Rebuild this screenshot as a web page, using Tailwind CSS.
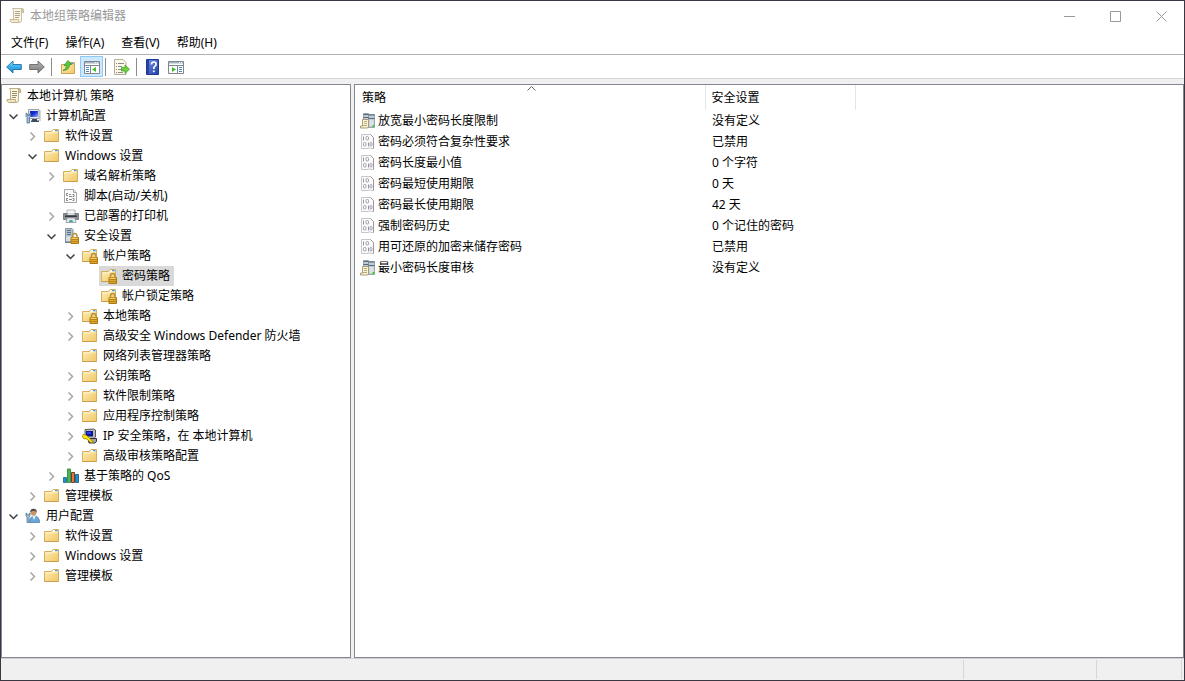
<!DOCTYPE html>
<html lang="zh-CN">
<head>
<meta charset="utf-8">
<meta name="viewport" content="width=device-width, initial-scale=1">
<title>本地组策略编辑器</title>
<script src="https://cdn.jsdelivr.net/npm/@tailwindcss/browser@4"></script>
</head>
<body class="h-screen overflow-hidden bg-white font-['Noto_Sans','Noto_Sans_CJK_SC',sans-serif] text-xs leading-5 text-black">

<svg class="absolute size-0" aria-hidden="true">
  <defs>
    <linearGradient id="gFolder" x1="0" y1="0" x2="1" y2="1"><stop offset="0" stop-color="#ffeeb5"/><stop offset="1" stop-color="#f0c765"/></linearGradient>
    <linearGradient id="gBlue" x1="0" y1="0" x2="0" y2="1"><stop offset="0" stop-color="#8fdcff"/><stop offset=".5" stop-color="#35aee8"/><stop offset="1" stop-color="#1d8ad0"/></linearGradient>
    <linearGradient id="gGray" x1="0" y1="0" x2="0" y2="1"><stop offset="0" stop-color="#b5b5b5"/><stop offset="1" stop-color="#7c7c7c"/></linearGradient>
    <linearGradient id="gHelp" x1="0" y1="0" x2="1" y2="1"><stop offset="0" stop-color="#6f8fe0"/><stop offset="1" stop-color="#2440a8"/></linearGradient>
    <linearGradient id="gScreen" x1="0" y1="0" x2="1" y2="1"><stop offset="0" stop-color="#0a1fb8"/><stop offset=".45" stop-color="#1530d0"/><stop offset="1" stop-color="#9db8ff"/></linearGradient>
  </defs>
  <symbol id="scroll" viewBox="0 0 16 16">
    <path d="M3.500.5h9.500q1.500 0 1.500 1.500v2.500h-2v7.500q0 2.500-2 2.500H3q1.500-.8 1.500-2.500V2.500q0-1.500-1-2z" fill="#fbf5dc" stroke="#b3a67f" stroke-width=".9"/>
    <path d="M1 11.500h8.500q-.3 2 1 3H2.500Q1 14 1 11.500z" fill="#f0e4bc" stroke="#b3a67f" stroke-width=".9"/>
    <path d="M12.500.8q2 0 2 1.500v2.200h-2z" fill="#d8c896" stroke="#b3a67f" stroke-width=".9"/>
    <path d="M6 3.500h5M6 5.500h5M6 7.500h5M6 9.500h4" stroke="#8d836b" stroke-width=".9"/>
  </symbol>
  <symbol id="folder" viewBox="0 0 16 16">
    <path d="M.5 13.500V3.500h7l1.500-2h5.500v12z" fill="url(#gFolder)" stroke="#d6ae62"/>
    <path d="M8.500 3.500l1-1.500h4v2H8z" fill="#fff"/>
    <path d="M11 2h2.500v1.500H11z" fill="#3d9de8"/>
    <path d="M1.500 5h7l1-1h4" stroke="#fff5cf" fill="none"/>
    <path d="M.5 13.500h14" stroke="#c99f4d"/>
  </symbol>
  <symbol id="padlock" viewBox="0 0 16 16">
    <path d="M9.500 10V8q0-2.500 2.200-2.500T14 8v2" fill="none" stroke="#b7903a" stroke-width="1.400"/>
    <path d="M8 9.500h7.500V15.500H8z" fill="#e2a92a" stroke="#a97716"/>
    <path d="M8.500 11.500h7M8.500 13.500h7" stroke="#ab7b19" stroke-width=".8"/>
    <path d="M8.500 10.200h6" stroke="#ffdc72"/>
  </symbol>
  <symbol id="lockfolder" viewBox="0 0 16 16"><use href="#folder"/><use href="#padlock"/></symbol>
  <symbol id="computer" viewBox="0 0 16 16">
    <path d="M3.500 1.500h10.500v9H3.500z" fill="#e7e9ee" stroke="#9da2ad"/>
    <path d="M5 3h8v6H5z" fill="url(#gScreen)"/>
    <path d="M14.500 2h1v11h-1z" fill="#a6abb5"/>
    <path d="M7 11h5v1.500h2v1.500H6v-1.500h1z" fill="#3e4b5b"/>
    <path d="M1 5v3.500l1 1V15h2.500V9.500l1-1V5L4.500 6v1.500h-2V6z" fill="#9dbdd7" stroke="#51758f" stroke-width=".8"/>
  </symbol>
  <symbol id="user" viewBox="0 0 16 16">
    <circle cx="8.500" cy="4.500" r="3" fill="#c99468"/>
    <path d="M5.300 4.500Q5 .8 8.500.8T11.800 4.500Q11 2.800 8.800 2.800T5.300 4.500z" fill="#4a4a48"/>
    <path d="M4.500 14.500q0-6 4.500-6.500 5.500 0 5.500 6.500z" fill="#6da7d8" stroke="#467fae" stroke-width=".8"/>
    <path d="M7.500 8l1.500 4 1.500-4z" fill="#f5f8fb"/>
    <path d="M1 5v3l1 1v5.500h2V9l1-1V5l-1 .5V7H2V5.500z" fill="#a9c6dd" stroke="#54758d" stroke-width=".8"/>
  </symbol>
  <symbol id="script" viewBox="0 0 16 16">
    <path d="M1.500 1.500h9l3 3v10h-12z" fill="#fbfbfb" stroke="#a6a6a6"/>
    <path d="M10.500 1.500v3h3" fill="#e5e5e5" stroke="#a6a6a6"/>
    <path d="M5 5.500H3.500v2H5M9.500 6.500H11v2H9.500M5 10.500H3.500v2H5M9.500 10.500H11v2H9.500M6 6.500h2M6 8.500h3M6 11.500h3" fill="none" stroke="#777b80" stroke-width=".9"/>
  </symbol>
  <symbol id="printer" viewBox="0 0 16 16">
    <path d="M4 2h8v4H4z" fill="#f6f6f6" stroke="#a7a7a7" stroke-width=".8"/>
    <path d="M.5 5.500h3.500v2h8v-2h3.500v6H.5z" fill="#8b9096" stroke="#6a6f75" stroke-width=".8"/>
    <path d="M2 7.500h12v1.500H2z" fill="#35383c"/>
    <path d="M4 10h8l1 4.500H3z" fill="#e4eaf0" stroke="#8d949c" stroke-width=".8"/>
    <path d="M6 12.500h4v1.500H6z" fill="#4da8e0"/><path d="M7 12h2v1.500H7z" fill="#4fae5a"/>
  </symbol>
  <symbol id="server" viewBox="0 0 16 16">
    <path d="M2.500.5h6.500l1 1v13H2.500z" fill="#b4c2ce" stroke="#7d8e9c" stroke-width=".9"/>
    <path d="M4 2.500h4M4 4.500h4M4 6.500h4" stroke="#5d6f80"/>
    <path d="M3.200 8.500h5.500V14H3.200z" fill="#d8e1e9"/>
    <path d="M2 14h7" stroke="#596b7a"/>
    <use href="#padlock"/>
  </symbol>
  <symbol id="ipsec" viewBox="0 0 16 16">
    <path d="M3 1.500L11.500 1l2 1v7l-2 1.500H3z" fill="#b9b9b9" stroke="#4c4c4c" stroke-width=".9"/>
    <path d="M4 3h7v5.500H4z" fill="#0d1590"/><path d="M5 4h4v2H5z" fill="#2542f0"/>
    <path d="M6 10.500h8.500v3L13 15H7z" fill="#a2a2a2" stroke="#222" stroke-width=".9"/>
    <path d="M1 6.500l3 .5 3 2.500 4.500 5H9L4 10.500l-2 .5-1.500-2z" fill="#ffed00" stroke="#8b7d00" stroke-width=".7"/>
  </symbol>
  <symbol id="bars" viewBox="0 0 16 16">
    <path d="M.5 9.500h3v5h-3z" fill="#1993d1" stroke="#1a5f87" stroke-width=".8"/>
    <path d="M4.500 1h3v13.500h-3z" fill="#46bb4b" stroke="#26812b" stroke-width=".8"/>
    <path d="M8.500 4.500h3v10h-3z" fill="#ee7243" stroke="#33251f" stroke-width=".8"/>
    <path d="M12.500 6.500h3v8h-3z" fill="#1c93d4" stroke="#1c4c6d" stroke-width=".8"/>
  </symbol>
  <symbol id="binary" viewBox="0 0 16 16">
    <path d="M1.500.5h9l3 3v11H11l-1-.8-2 .8H1.500z" fill="#fbfbfc" stroke="#c6c6ca"/>
    <path d="M10.500.5l3 3v11" stroke="#98989d" fill="none"/>
    <path d="M3.500 2.500v4M8.500 8.500v4" stroke="#9a93a6"/>
    <rect x="6" y="2.500" width="2.500" height="3.500" rx="1" fill="none" stroke="#9a93a6" stroke-width=".9"/>
    <rect x="3.500" y="8.500" width="2.500" height="3.500" rx="1" fill="none" stroke="#9a93a6" stroke-width=".9"/>
    <rect x="10" y="8.500" width="2" height="3.500" rx="1" fill="none" stroke="#9a93a6" stroke-width=".9"/>
  </symbol>
  <symbol id="servers" viewBox="0 0 16 16">
    <path d="M3.500.5h5v14h-5zM8.500 1.500h6v13h-6z" fill="#c3ccd4" stroke="#8797a4" stroke-width=".8"/>
    <path d="M3.500 1.500h5M8.500 2h6M3.500 4.500h5M8.500 5.500h6" stroke="#556b7c"/>
    <path d="M9.500 7h4v6h-4z" fill="#dae1e7"/>
    <path d="M12.500 12h2v2h-2z" fill="#3ccc2f"/>
    <path d="M2.500 6.500h6v7.500q-.5 1-1.500 1H.5v-2h2z" fill="#fbf3d2" stroke="#a4946b" stroke-width=".9"/>
    <path d="M4 8.500h3M4 10.500h3M3 12.500h4" stroke="#a09575" stroke-width=".8"/>
  </symbol>
  <symbol id="back" viewBox="0 0 16 16"><path d="M.7 8L7 2v3.500h8.300v5H7V14z" fill="url(#gBlue)" stroke="#1b6fae" stroke-width=".9" stroke-linejoin="round"/></symbol>
  <symbol id="forward" viewBox="0 0 16 16"><path d="M15.300 8L9 2v3.500H.7v5H9V14z" fill="url(#gGray)" stroke="#666" stroke-width=".9" stroke-linejoin="round"/></symbol>
  <symbol id="up" viewBox="0 0 16 16">
    <path d="M1.500 14.500V5.500h6l1.500-2h5.500v11z" fill="url(#gFolder)" stroke="#cfa353"/>
    <path d="M10.500 4h3v1.200h-3z" fill="#3d9de8"/>
    <path d="M3 11.500q3.500-1 3.500-5H4L8 1.500l3.500 4H9.500q0 5.500-6.500 6z" fill="#58c83e" stroke="#2d8e20" stroke-width=".7"/>
  </symbol>
  <symbol id="paneleft" viewBox="0 0 16 16">
    <path d="M.5 2.500h15v12H.5z" fill="#fff" stroke="#7d8791"/><path d="M1 3h14v1.500H1z" fill="#a9b2ba"/>
    <path d="M1 6.500h14M6.500 6.500v8" stroke="#7d8791"/><path d="M11 3.500h1M13 3.500h1" stroke="#fff"/>
    <path d="M2 8.500h3M2 10.500h3M2 12.500h3" stroke="#4b86bd"/>
    <path d="M12 8v5l-4-2.500z" fill="#43bb2b"/>
  </symbol>
  <symbol id="paneright" viewBox="0 0 16 16">
    <path d="M.5 2.500h15v12H.5z" fill="#fff" stroke="#7d8791"/><path d="M1 3h14v1.500H1z" fill="#a9b2ba"/>
    <path d="M1 6.500h14M9.500 6.500v8" stroke="#7d8791"/><path d="M11 3.500h1M13 3.500h1" stroke="#fff"/>
    <path d="M11 8.500h3M11 10.500h3M11 12.500h3" stroke="#4b86bd"/>
    <path d="M4 8v5l4-2.500z" fill="#43bb2b"/>
  </symbol>
  <symbol id="export" viewBox="0 0 16 16">
    <path d="M.5.5h8.500l3 3v12H.5z" fill="#fdf9e8" stroke="#b5ad98"/>
    <path d="M2 4.500h1M4 4.500h6M2 7.500h1M4 7.500h4M2 10.500h1M4 10.500h4M2 13.500h1M4 13.500h5" stroke="#7d7a8c" stroke-width=".9"/>
    <path d="M7.500 8.500h3.500V6l4.500 4.200L11 14.500V12H7.500z" fill="#6ed13f" stroke="#3b9a22" stroke-width=".7"/>
  </symbol>
  <symbol id="help" viewBox="0 0 16 16">
    <path d="M1.500.5h12v15h-12z" fill="url(#gHelp)" stroke="#1f3a93"/><path d="M2 1h2v14H2z" fill="#2743a3"/>
    <path d="M6.500 5.500q0-2.500 2.300-2.500t2.300 2.200q0 1.300-1.200 2T8.800 9.500V10" fill="none" stroke="#fff" stroke-width="1.700"/>
    <path d="M7.900 11.500h1.800v1.700H7.900z" fill="#fff"/>
  </symbol>
</svg>

<div class="flex h-full flex-col border border-[#3a3742]">
  <header class="flex h-[30px] shrink-0 items-center pl-2">
    <svg class="size-4 opacity-80"><use href="#scroll"/></svg>
    <h1 class="ml-[5px] flex-1 text-[#999]">本地组策略编辑器</h1>
    <button aria-label="最小化" class="flex h-full w-[46px] items-center justify-center"><svg class="size-[11px]" viewBox="0 0 11 11"><path d="M0 5.500h11" stroke="#999"/></svg></button>
    <button aria-label="最大化" class="flex h-full w-[46px] items-center justify-center"><svg class="size-[11px]" viewBox="0 0 11 11"><path d="M.5.5h10v10H.5z" fill="none" stroke="#999"/></svg></button>
    <button aria-label="关闭" class="flex h-full w-[46px] items-center justify-center"><svg class="size-[11px]" viewBox="0 0 11 11"><path d="M.5.5l10 10M10.500.5l-10 10" stroke="#999"/></svg></button>
  </header>

  <nav class="flex h-6 shrink-0 items-center gap-[17px] border-b border-[#b0b0b0] pl-[10px]">
    <button>文件(F)</button><button>操作(A)</button><button>查看(V)</button><button>帮助(H)</button>
  </nav>

  <div role="toolbar" aria-label="工具栏" class="flex h-6 shrink-0 items-center border-b border-[#d8d8d8] pl-[5px]">
    <button aria-label="后退"><svg class="size-4"><use href="#back"/></svg></button>
    <button aria-label="前进" class="ml-[7px]"><svg class="size-4"><use href="#forward"/></svg></button>
    <span class="ml-[6px] h-[18px] w-px bg-[#8c8c8c]"></span>
    <button aria-label="向上" class="ml-2"><svg class="size-4"><use href="#up"/></svg></button>
    <button aria-label="显示/隐藏控制台树" aria-pressed="true" class="ml-1 flex h-[21px] w-[23px] items-center justify-center border border-[#90c8f6] bg-[#cce8ff]"><svg class="h-4 w-4 shrink-0"><use href="#paneleft"/></svg></button>
    <span class="ml-[2px] h-[18px] w-px bg-[#8c8c8c]"></span>
    <button aria-label="导出列表" class="ml-2"><svg class="size-4"><use href="#export"/></svg></button>
    <span class="ml-[6px] h-[18px] w-px bg-[#8c8c8c]"></span>
    <button aria-label="帮助" class="ml-2"><svg class="size-4"><use href="#help"/></svg></button>
    <button aria-label="显示/隐藏操作窗格" class="ml-[7px]"><svg class="size-4"><use href="#paneright"/></svg></button>
  </div>

  <main class="flex min-h-0 flex-1 gap-[3px] bg-[#f0f0f0] pt-[5px]">
    <section aria-label="控制台树" class="w-[350px] shrink-0 overflow-hidden border border-[#828790] bg-white pt-px pl-[2px]">
      <button class="flex h-5 items-center pl-[2px]"><svg class="size-4"><use href="#scroll"/></svg><span class="ml-[5px]">本地计算机 策略</span></button>
      <ul id="tree"></ul>
    </section>
    <section aria-label="策略列表" class="min-w-0 flex-1 overflow-hidden border border-[#828790] bg-white">
      <table class="w-[500px] table-fixed border-collapse text-left">
        <colgroup><col class="w-[350px]"><col class="w-[150px]"></colgroup>
        <thead>
          <tr class="h-[25px]">
            <th class="relative border-r border-[#e5e5e5] p-0 pl-[7px] font-normal" aria-sort="ascending">策略<svg class="absolute top-px left-[172px] h-[5px] w-[9px]" viewBox="0 0 9 5"><path d="M.5 4.500l4-4 4 4" fill="none" stroke="#666"/></svg></th>
            <th class="border-r border-[#e5e5e5] p-0 pl-[6px] font-normal">安全设置</th>
          </tr>
        </thead>
        <tbody id="list"></tbody>
      </table>
    </section>
  </main>

  <footer class="flex h-[22px] shrink-0 justify-end border-t border-[#d0d0d0] bg-[#f0f0f0] py-px pr-[2px]">
    <span class="w-[133px] border-l border-[#d7d7d7]"></span>
    <span class="w-[86px] border-x border-[#d7d7d7]"></span>
  </footer>
</div>

<script>
// Tree node: [icon, label, state, children]; state is "open", "closed" or "" for a leaf.
const tree = [
  ["computer", "计算机配置", "open", [
    ["folder", "软件设置", "closed"],
    ["folder", "Windows 设置", "open", [
      ["folder", "域名解析策略", "closed"],
      ["script", "脚本(启动/关机)", ""],
      ["printer", "已部署的打印机", "closed"],
      ["server", "安全设置", "open", [
        ["lockfolder", "帐户策略", "open", [
          ["lockfolder", "密码策略", ""],
          ["lockfolder", "帐户锁定策略", ""]
        ]],
        ["lockfolder", "本地策略", "closed"],
        ["folder", "高级安全 Windows Defender 防火墙", "closed"],
        ["folder", "网络列表管理器策略", ""],
        ["folder", "公钥策略", "closed"],
        ["folder", "软件限制策略", "closed"],
        ["folder", "应用程序控制策略", "closed"],
        ["ipsec", "IP 安全策略，在 本地计算机", "closed"],
        ["folder", "高级审核策略配置", "closed"]
      ]],
      ["bars", "基于策略的 QoS", "closed"]
    ]],
    ["folder", "管理模板", "closed"]
  ]],
  ["user", "用户配置", "open", [
    ["folder", "软件设置", "closed"],
    ["folder", "Windows 设置", "closed"],
    ["folder", "管理模板", "closed"]
  ]]
];
const selected = "密码策略";
const toggles = {
  open: '<button aria-label="折叠" class="flex h-5 w-[19px] items-center justify-center"><svg class="size-[9px]" viewBox="0 0 9 9"><path d="M.5 2.500l4 4 4-4" fill="none" stroke="#404040" stroke-width="1.500"/></svg></button>',
  closed: '<button aria-label="展开" class="flex h-5 w-[19px] items-center justify-center"><svg class="size-[9px]" viewBox="0 0 9 9"><path d="M2.500.5l4 4-4 4" fill="none" stroke="#a6a6a6" stroke-width="1.500"/></svg></button>',
  "": '<span class="w-[19px]"></span>'
};
const node = ([icon, label, state, kids]) => `<li><div class="flex h-5">${toggles[state]}<button class="${label === selected ? "flex h-5 items-center bg-[#d9d9d9] pr-1 pl-[2px] whitespace-nowrap" : "flex h-5 items-center pr-1 pl-[2px] whitespace-nowrap"}"><svg class="size-4"><use href="#${icon}"/></svg><span class="ml-[5px]">${label}</span></button></div>${kids ? `<ul class="pl-[19px]">${kids.map(node).join("")}</ul>` : ""}</li>`;
document.getElementById("tree").innerHTML = tree.map(node).join("");

const policies = [
  ["servers", "放宽最小密码长度限制", "没有定义"],
  ["binary", "密码必须符合复杂性要求", "已禁用"],
  ["binary", "密码长度最小值", "0 个字符"],
  ["binary", "密码最短使用期限", "0 天"],
  ["binary", "密码最长使用期限", "42 天"],
  ["binary", "强制密码历史", "0 个记住的密码"],
  ["binary", "用可还原的加密来储存密码", "已禁用"],
  ["servers", "最小密码长度审核", "没有定义"]
];
document.getElementById("list").innerHTML = policies.map(([icon, name, value]) =>
  `<tr class="h-[21px]"><td class="p-0 pl-[5px]"><div class="flex items-center gap-[2px]"><svg class="size-4"><use href="#${icon}"/></svg>${name}</div></td><td class="p-0 pl-[7px]">${value}</td></tr>`).join("");
</script>
</body>
</html>
